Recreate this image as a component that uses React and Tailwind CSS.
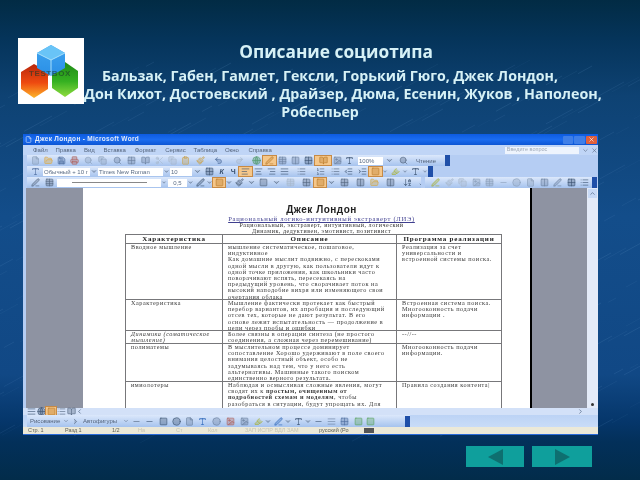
import React from 'react';
import {
  File, FolderOpen, Save, Printer, Search, Scissors, Copy, Clipboard, Paintbrush, Undo2, Redo2, Globe, Table, Columns2,
  PenLine, AlignLeft, AlignCenter, AlignRight, AlignJustify, List, ListOrdered, Indent, Outdent, Highlighter, Square,
  Circle, Image, Minus, ChevronDown, ChevronUp, ChevronRight, ChevronLeft, X, Sigma, ArrowDownAZ, Grid2x2, Type, BookOpen,
} from 'lucide-react';

const Tool = ({ icon: Icon, color = '#52647e', active, w = 'w-[13px]' }) => (
  <div className={`${w} h-[9px] flex items-center justify-center shrink-0 ${active ? 'bg-[#f5c78a] outline outline-[#c78a45]' : ''}`}>
    {Icon ? <Icon size={9} color={color} fill={color} fillOpacity={0.35} strokeWidth={1.6} /> : null}
  </div>
);

const Handle = () => <div className="w-[5px] h-[11px] shrink-0 bg-[#1f4fa8]" />;

const Box = ({ w, children }) => (
  <div className={`${w} h-[8px] bg-white shrink-0 flex items-center px-[1px] text-[6px] text-[#5a6c85] leading-none overflow-hidden whitespace-nowrap`}>
    {children}
  </div>
);

const menu = [
  ['Файл', 'w-[23px]'], ['Правка', 'w-[29px]'], ['Вид', 'w-[20px]'], ['Вставка', 'w-[32px]'], ['Формат', 'w-[31px]'],
  ['Сервис', 'w-[29px]'], ['Таблица', 'w-[32px]'], ['Окно', 'w-[24px]'], ['Справка', 'w-[30px]'],
];

const Cell = ({ className = '', children }) => (
  <div className={`pl-[5px] border-r border-b border-[#77777a] overflow-hidden font-['Liberation_Serif',serif] text-[6.2px] leading-[6.2px] tracking-[0.55px] text-[#3a3a3a] whitespace-pre ${className}`}>
    {children}
  </div>
);

const rows = [
  {
    h: 'h-[56px]',
    a: 'Вводное мышление',
    b: 'мышление систематическое, пошаговое,\nиндуктивное\nКак домашние мыслит подвижно, с перескоками\nодной мысли в другую, как пользователи идут к\nодной точке приложения, как школьники часто\nповорачивают вспять, пересекаясь на\nпредыдущий уровень, что сворачивает поток на\nвысокий наподобие вихря или изменяющего свои\nочертания облака',
    c: 'Реализация за счет\nуниверсальности и\nвстроенной системы поиска.',
  },
  {
    h: 'h-[31px]',
    a: 'Характеристика',
    b: 'Мышление фактически протекает как быстрый\nперебор вариантов, их апробация и последующий\nотсев тех, которые не дают результат. В его\nоснове лежит испытательность — продолжение в\nцепи через пробы и ошибки',
    c: 'Встроенная система поиска.\nМногооконность подачи\nинформации .',
  },
  {
    h: 'h-[13px]',
    a: <em>{'Динамика (соматическое\nмышление)'}</em>,
    b: 'Более связны в операции синтеза (не простого\nсоединения, а сложная через перемешивание)',
    c: '--//--',
  },
  {
    h: 'h-[38px]',
    a: 'полиматемы',
    b: 'В мыслительном процессе доминирует\nсопоставление Хорошо удерживают в поле своего\nвнимания целостный объект, особо не\nзадумываясь над тем, что у него есть\nальтернативы. Машинные такого поиском\nединственно верного результата.',
    c: 'Многооконность подачи\nинформации.',
  },
  {
    h: 'h-[30px]',
    a: 'имиолотеры',
    b: <>{'Наблюдая и осмысливая сложные явления, могут\nсводят их к '}<b className="inline-block">простым, очищенным от</b>{'\n'}<b className="inline-block">подробностей схемам и моделям</b>{', чтобы\nразобраться в ситуации, будут упрощать их. Для'}</>,
    c: 'Правила создания контента|',
  },
];

// diagonal streaks of the slide's marble background
const streaks = Array.from({ length: 380 }, (_, i) => {
  const x = (i * 137) % 660;
  const y = 60 + ((i * 211) % 370);
  const len = 8 + (i * 7) % 22;
  return { x, y, len, o: 0.05 + ((i * 13) % 10) / 80 };
});

const Logo = () => (
  <svg width="66" height="66" viewBox="0 0 66 66" className="shrink-0 bg-white blur-[0.4px]">
    <defs>
      <linearGradient id="red" x1="0" y1="0" x2="0" y2="1">
        <stop offset="0" stopColor="#b8260c" />
        <stop offset="0.55" stopColor="#ee4a10" />
        <stop offset="1" stopColor="#fdb52a" />
      </linearGradient>
      <linearGradient id="green" x1="0" y1="0" x2="0" y2="1">
        <stop offset="0" stopColor="#1f8a17" />
        <stop offset="0.55" stopColor="#35b021" />
        <stop offset="1" stopColor="#8fdc3f" />
      </linearGradient>
      <linearGradient id="blue" x1="0" y1="0" x2="0" y2="1">
        <stop offset="0" stopColor="#3fa4f0" />
        <stop offset="1" stopColor="#2a8fe6" />
      </linearGradient>
    </defs>
    <path d="M3 34 L16 26 L30 34 L30 51 L16 60 L3 51Z" fill="url(#red)" />
    <path d="M34 33 L47 24 L60 33 L60 50 L47 59 L34 50Z" fill="url(#green)" />
    <path d="M19 15 L33 7 L47 15 L47 30 L33 38 L19 30Z" fill="url(#blue)" />
    <path d="M19 15 L33 22 L47 15 L33 7Z" fill="#69c4f7" />
    <path d="M19 15 L33 22 L33 38 M47 15 L33 22" stroke="#a8e0fb" strokeWidth="1" fill="none" />
    <text x="32" y="38" textAnchor="middle" fontSize="8" fontWeight="700" letterSpacing="0.6" fontFamily="Liberation Sans, sans-serif" fill="#1c3a2a" opacity="0.6">TESTBOX</text>
  </svg>
);

export default function App() {
  return (
    <div className="relative w-[640px] h-[480px] overflow-hidden font-['Liberation_Sans',sans-serif] bg-[linear-gradient(180deg,#022b44_0%,#05345a_8%,#0e4273_20%,#134d8a_45%,#114885_78%,#05366a_88%,#03305a_92%,#022c4a_100%)]">
      <svg className="absolute inset-0 blur-[0.6px]" width="640" height="480">
        {streaks.map((s, i) => (
          <line key={i} x1={s.x} y1={s.y} x2={s.x - s.len} y2={s.y + s.len * 0.55} stroke="#6f9fd0" strokeOpacity={s.o} strokeWidth="1" />
        ))}
      </svg>

      <div className="relative flex flex-col">
        {/* header */}
        <div className="flex h-[134px] pt-[38px] pl-[18px]">
          <Logo />
          <div className="flex-1 flex flex-col text-center font-['Open_Sans',sans-serif] font-bold text-[#d6f1f6] blur-[0.3px] whitespace-nowrap">
            <div className="pr-[52px] text-[17.3px] leading-[20px] mt-[4px]">Описание социотипа</div>
            <div className="pr-[64px] text-[14.2px] leading-[18px] mt-[5px]">Бальзак, Габен, Гамлет, Гексли, Горький Гюго, Джек Лондон,</div>
            <div className="pr-[38px] text-[14.3px] leading-[18px]">Дон Кихот, Достоевский , Драйзер, Дюма, Есенин, Жуков , Наполеон,</div>
            <div className="pr-[84px] text-[14.2px] leading-[17px]">Робеспьер</div>
          </div>
        </div>

        {/* word window */}
        <div className="ml-[23px] w-[575px] h-[301px] flex flex-col bg-[#b5cdf3] overflow-hidden blur-[0.45px] font-['Liberation_Sans',sans-serif] border-b border-[#2a6ad8]">
          <div className="h-[11px] flex items-center bg-[linear-gradient(180deg,#0d5be0,#1a6cf0_50%,#0c55d4)] shrink-0">
            <File size={7} color="#dfe9fb" className="ml-[2px]" />
            <span className="ml-[3px] text-[6.5px] font-bold text-[#dfe9fb] leading-none tracking-[0.3px]">Джек Лондон - Microsoft Word</span>
            <div className="ml-auto mr-[1px] flex gap-[1px]">
              <div className="w-[10px] h-[8px] bg-[#3f7fe8] rounded-[1px]" />
              <div className="w-[11px] h-[8px] bg-[#3f7fe8] rounded-[1px]" />
              <div className="w-[11px] h-[8px] bg-[#e0603c] rounded-[1px] flex items-center justify-center"><X size={7} color="#fff" /></div>
            </div>
          </div>

          <div className="h-[10px] flex items-center pl-[10px] shrink-0 text-[6px] leading-none text-[#54647c] bg-[#c0d5f6]">
            {menu.map(([t, w]) => <span key={t} className={w}>{t}</span>)}
            <div className="ml-[227px] w-[76px] h-[7px] bg-[#eef4fd] px-[2px] text-[5.5px] text-[#a0aab8] flex items-center">Введите вопрос</div>
            <ChevronDown size={7} color="#54647c" className="ml-[3px]" />
            <X size={7} color="#54647c" className="ml-[2px]" />
          </div>

          <div className="h-[11px] flex items-center pl-[4px] shrink-0">
            <div className="w-[423px] h-[11px] flex items-center bg-[linear-gradient(180deg,#dce8fb,#a6c3ee)] pl-[2px] overflow-hidden">
              <Tool icon={File} color="#8ba0bb" />
              <Tool icon={FolderOpen} color="#e0a83a" />
              <Tool icon={Save} color="#4d6c9e" />
              <Tool icon={Printer} color="#b0605a" />
              <Tool icon={Search} color="#8ba0bb" w="w-[15px]" />
              <Tool icon={Copy} color="#8ba0bb" />
              <Tool icon={Search} color="#6a7f9d" w="w-[16px]" />
              <Tool icon={Grid2x2} color="#6a7f9d" />
              <Tool icon={BookOpen} color="#6a7f9d" w="w-[15px]" />
              <Tool icon={Scissors} color="#a8b8cc" />
              <Tool icon={Copy} color="#a8b8cc" />
              <Tool icon={Clipboard} color="#c9a24f" />
              <Tool icon={Paintbrush} color="#c9a24f" w="w-[16px]" />
              <Tool icon={Undo2} color="#4d6c9e" w="w-[20px]" />
              <Tool icon={Redo2} color="#a8b8cc" w="w-[22px]" />
              <Tool icon={Globe} color="#4f9b6a" />
              <Tool icon={PenLine} color="#b97a2a" active />
              <Tool icon={Table} color="#6a7f9d" />
              <Tool icon={Columns2} color="#6a7f9d" />
              <Tool icon={Grid2x2} color="#39506f" />
              <Tool icon={BookOpen} color="#b97a2a" active w="w-[16px]" />
              <Tool icon={Image} color="#6a7f9d" />
              <Tool icon={Type} color="#39506f" w="w-[10px]" />
              <Box w="w-[25px] ml-[4px]">100%</Box>
              <Tool icon={ChevronDown} />
              <Tool icon={Search} w="w-[14px]" />
              <div className="ml-[6px] w-[32px] text-[6px] leading-none text-[#54647c] whitespace-nowrap">Чтение</div>
              <div className="ml-auto"><Handle /></div>
            </div>
          </div>

          <div className="h-[11px] flex items-center pl-[4px] shrink-0">
            <div className="w-[406px] h-[11px] flex items-center bg-[linear-gradient(180deg,#dce8fb,#a6c3ee)] pl-[2px] overflow-hidden">
              <Tool icon={Type} color="#4d6c9e" />
              <Box w="w-[47px] ml-[1px]">Обычный + 10 г</Box>
              <Tool icon={ChevronDown} w="w-[8px]" />
              <Box w="w-[65px]">Times New Roman</Box>
              <Tool icon={ChevronDown} w="w-[7px]" />
              <Box w="w-[22px]">10</Box>
              <Tool icon={ChevronDown} w="w-[10px]" />
              <Tool icon={Grid2x2} color="#39506f" w="w-[14px]" />
              <div className="w-[13px] text-center text-[7px] leading-none italic font-bold text-[#39506f]">К</div>
              <div className="w-[13px] text-center text-[7px] leading-none font-bold text-[#39506f]">Ч</div>
              <Tool icon={AlignLeft} color="#39506f" active />
              <Tool icon={AlignCenter} color="#39506f" />
              <Tool icon={AlignRight} color="#39506f" />
              <Tool icon={AlignJustify} color="#39506f" />
              <Tool icon={List} w="w-[20px]" />
              <Tool icon={ListOrdered} w="w-[18px]" />
              <Tool icon={List} />
              <Tool icon={Outdent} color="#39506f" />
              <Tool icon={Indent} color="#39506f" w="w-[14px]" />
              <Tool icon={Square} color="#b97a2a" active />
              <Tool icon={ChevronDown} w="w-[6px]" />
              <Tool icon={Highlighter} color="#a6b02c" w="w-[14px]" />
              <Tool icon={ChevronDown} w="w-[6px]" />
              <Tool icon={Type} color="#39506f" w="w-[14px]" />
              <Tool icon={ChevronDown} w="w-[6px]" />
              <div className="ml-auto"><Handle /></div>
            </div>
          </div>

          <div className="h-[11px] flex items-center pl-[4px] shrink-0">
            <div className="w-[394px] h-[11px] flex items-center bg-[linear-gradient(180deg,#dce8fb,#a6c3ee)] pl-[2px] overflow-hidden">
              <Tool icon={PenLine} />
              <Tool icon={Table} w="w-[14px]" />
              <div className="w-[104px] h-[8px] bg-white shrink-0 flex items-center justify-center ml-[1px]">
                <div className="w-[75px] h-px bg-[#888]" />
              </div>
              <Tool icon={ChevronDown} w="w-[6px]" />
              <Box w="w-[19px] ml-[1px] justify-center">0,5</Box>
              <Tool icon={ChevronDown} w="w-[7px]" />
              <Tool icon={PenLine} color="#39506f" w="w-[12px]" />
              <Tool icon={ChevronDown} w="w-[7px]" />
              <Tool icon={Square} color="#b97a2a" active w="w-[12px]" />
              <Tool icon={ChevronDown} w="w-[8px]" />
              <Tool icon={Paintbrush} w="w-[13px]" />
              <Tool icon={ChevronDown} w="w-[11px]" />
              <Tool icon={Square} w="w-[13px]" />
              <Tool icon={ChevronDown} w="w-[12px]" />
              <Tool icon={Table} color="#a8b8cc" w="w-[16px]" />
              <Tool icon={Grid2x2} w="w-[16px]" />
              <Tool icon={Square} color="#b97a2a" active w="w-[12px]" />
              <Tool icon={ChevronDown} w="w-[10px]" />
              <Tool icon={Grid2x2} w="w-[16px]" />
              <Tool icon={Columns2} w="w-[16px]" />
              <Tool icon={FolderOpen} color="#d3a63f" />
              <Tool icon={Columns2} w="w-[18px]" />
              <Tool icon={ArrowDownAZ} color="#39506f" w="w-[16px]" />
              <Tool icon={ArrowDownAZ} color="#39506f" w="w-[16px]" />
              <Tool icon={Sigma} color="#39506f" />
              <div className="ml-auto"><Handle /></div>
            </div>
            <div className="ml-[4px] w-[172px] h-[11px] flex items-center justify-between bg-[linear-gradient(180deg,#dce8fb,#a6c3ee)] pl-[4px]">
              <Tool icon={PenLine} color="#a6b02c" />
              <Tool icon={Paintbrush} color="#a8b8cc" />
              <Tool icon={Copy} color="#a8b8cc" />
              <Tool icon={Image} color="#8ba0bb" />
              <Tool icon={Table} color="#8ba0bb" />
              <Tool icon={Minus} color="#8ba0bb" />
              <Tool icon={Circle} color="#8ba0bb" />
              <Tool icon={File} color="#8ba0bb" />
              <Tool icon={Columns2} color="#6a7f9d" />
              <Tool icon={PenLine} color="#6a7f9d" />
              <Tool icon={Grid2x2} color="#39506f" />
              <Tool icon={List} color="#39506f" />
              <Handle />
            </div>
          </div>

          {/* document area */}
          <div className="flex-1 min-h-0 flex pl-[3px]">
            <div className="w-[57px] bg-[#8e93a2]" />
            <div className="w-[447px] bg-white overflow-hidden flex flex-col items-center">
              <div className="h-[17px] shrink-0" />
              <div className="ml-[30px] font-['Liberation_Sans',sans-serif] font-bold text-[10px] leading-[10px] tracking-[0.5px] text-[#222]">Джек Лондон</div>
              <div className="ml-[30px] font-['Liberation_Serif',serif] text-[#3f3f8f] underline text-[6.6px] leading-[7px] tracking-[0.7px] whitespace-nowrap">Рациональный логико-интуитивный экстраверт (ЛИЭ)</div>
              <div className="ml-[30px] font-['Liberation_Serif',serif] text-[#333] text-[6px] leading-[6px] tracking-[0.55px] whitespace-nowrap">Рациональный, экстраверт, интуитивный, логический</div>
              <div className="ml-[30px] font-['Liberation_Serif',serif] text-[#333] text-[6px] leading-[6px] tracking-[0.55px] whitespace-nowrap">Динамик, дедуктивен, эмотивист, позитивист</div>

              <div className="ml-[14px] w-[377px] shrink-0 grid grid-cols-[97px_174px_105px] border-l border-t border-[#77777a]">
                <Cell className="h-[9px] !pl-0 text-center font-bold !text-[7px] !leading-[8px] !tracking-[0.8px] !text-[#222]">Характеристика</Cell>
                <Cell className="h-[9px] !pl-0 text-center font-bold !text-[7px] !leading-[8px] !tracking-[0.8px] !text-[#222]">Описание</Cell>
                <Cell className="h-[9px] !pl-0 text-center font-bold !text-[7px] !leading-[8px] !tracking-[0.8px] !text-[#222]">Программа реализации</Cell>
                {rows.map((r, i) => (
                  <React.Fragment key={i}>
                    <Cell className={r.h}>{r.a}</Cell>
                    <Cell className={r.h}>{r.b}</Cell>
                    <Cell className={r.h}>{r.c}</Cell>
                  </React.Fragment>
                ))}
              </div>
            </div>
            <div className="w-[2px] bg-black" />
            <div className="w-[55px] bg-[#8e93a2]" />
            <div className="w-[11px] bg-[#e4ebf8] flex flex-col items-center">
              <div className="w-[9px] h-[9px] mt-[1px] bg-[#c8daf6] flex items-center justify-center"><ChevronUp size={7} color="#39506f" /></div>
              <div className="mt-auto mb-[2px] w-[3px] h-[3px] rounded-full bg-[#333]" />
            </div>
          </div>

          {/* view buttons and horizontal scroll */}
          <div className="h-[7px] flex items-center pl-[3px] bg-[#d3e1f8] shrink-0">
            <Tool icon={AlignJustify} color="#39506f" w="w-[10px]" />
            <Tool icon={Globe} color="#39506f" w="w-[10px]" />
            <Tool icon={Square} color="#b97a2a" active w="w-[10px]" />
            <Tool icon={List} w="w-[10px]" />
            <Tool icon={BookOpen} w="w-[10px]" />
            <ChevronLeft size={7} color="#39506f" />
            <ChevronRight size={7} color="#39506f" className="ml-auto mr-[14px]" />
          </div>

          {/* drawing toolbar */}
          <div className="h-[12px] flex items-center pl-[4px] bg-[linear-gradient(180deg,#bcd3f5,#c9dcf8)] shrink-0 text-[6px] leading-none text-[#54647c]">
            <div className="w-[383px] h-[12px] flex items-center bg-[linear-gradient(180deg,#dce8fb,#a6c3ee)] overflow-hidden">
              <span className="w-[36px] pl-[3px] whitespace-nowrap">Рисование</span>
              <ChevronDown size={6} />
              <Tool icon={ChevronRight} w="w-[12px]" />
              <span className="ml-[2px] w-[40px] whitespace-nowrap">Автофигуры</span>
              <ChevronDown size={6} />
              <Tool icon={Minus} w="w-[14px]" />
              <Tool icon={Minus} color="#39506f" w="w-[13px]" />
              <Tool icon={Square} color="#39506f" w="w-[14px]" />
              <Tool icon={Circle} color="#39506f" w="w-[13px]" />
              <Tool icon={File} color="#6a7f9d" />
              <Tool icon={Type} color="#2a64b8" w="w-[13px]" />
              <Tool icon={Circle} color="#6a7f9d" w="w-[15px]" />
              <Tool icon={Image} color="#b0605a" w="w-[13px]" />
              <Tool icon={Image} color="#6a7f9d" w="w-[15px]" />
              <Tool icon={Highlighter} color="#a6b02c" w="w-[12px]" />
              <Tool icon={ChevronDown} w="w-[8px]" />
              <Tool icon={PenLine} color="#2a64b8" w="w-[12px]" />
              <Tool icon={ChevronDown} w="w-[8px]" />
              <Tool icon={Type} color="#39506f" w="w-[12px]" />
              <Tool icon={ChevronDown} w="w-[8px]" />
              <Tool icon={Minus} color="#39506f" w="w-[13px]" />
              <Tool icon={AlignJustify} color="#6a7f9d" w="w-[13px]" />
              <Tool icon={Grid2x2} color="#4d6c9e" w="w-[13px]" />
              <Tool icon={Square} color="#58a35a" w="w-[14px]" />
              <Tool icon={Square} color="#58a35a" w="w-[10px]" />
              <div className="ml-auto"><Handle /></div>
            </div>
          </div>

          {/* status bar */}
          <div className="h-[7px] flex items-center bg-[#ece9d8] shrink-0 text-[5.5px] leading-none text-[#5d5d55] whitespace-nowrap">
            <span className="ml-[5px] w-[37px]">Стр. 1</span>
            <span className="w-[47px]">Разд 1</span>
            <span className="w-[26px]">1/2</span>
            <span className="w-[38px] text-[#c7c4b4]">На</span>
            <span className="w-[32px] text-[#c7c4b4]">Ст</span>
            <span className="w-[37px] text-[#c7c4b4]">Кол</span>
            <span className="w-[62px] text-[#c7c4b4]">ЗАП ИСПР ВДЛ ЗАМ</span>
            <span className="ml-[12px] w-[45px]">русский (Ро</span>
            <div className="w-[10px] h-[5px] bg-[#555]" />
          </div>
        </div>

        {/* slide navigation */}
        <div className="flex justify-end pr-[48px] gap-[8px] mt-[11px]">
          <div className="w-[58px] h-[21px] bg-[#0f9f9c] flex items-center justify-center">
            <div className="w-0 h-0 border-y-[8px] border-y-transparent border-r-[15px] border-r-[#0e6f70]" />
          </div>
          <div className="w-[60px] h-[21px] bg-[#0f9f9c] flex items-center justify-center">
            <div className="w-0 h-0 border-y-[8px] border-y-transparent border-l-[15px] border-l-[#0e6f70]" />
          </div>
        </div>
      </div>
    </div>
  );
}
